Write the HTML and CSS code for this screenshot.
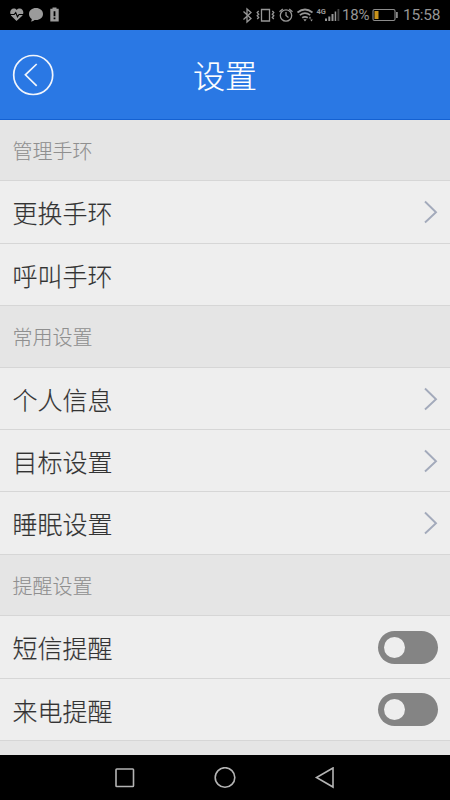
FILE: index.html
```html
<!DOCTYPE html>
<html lang="zh-CN">
<head>
<meta charset="utf-8">
<title>设置</title>
<link rel="stylesheet" href="styles.css">
</head>
<body>
<div class="statusbar">
  <svg class="status-left" width="52" height="16" viewBox="0 0 52 16">
    <path fill="#9b9b9b" d="M6.500 14 1.200 8.700C-1 5.500.7 1.500 3.700 1.500 5 1.500 6 2 6.700 2.900 7.400 2 8.500 1.500 9.800 1.500c3 0 4.800 4 2.500 7.200z"/>
    <path fill="none" stroke="#000" stroke-width="1.100" d="M0 7.500h4.200l1.500-2 1.800 4.300 1.500-2.300H14"/>
    <path fill="#9b9b9b" d="M26 1c4 0 7 2.500 7 6s-3 6-7 6h-1.500c-.8.900-2 1.500-3.700 1.400.8-.8 1-1.600.9-2.500C20 10.800 19 9 19 7c0-3.500 3-6 7-6z"/>
    <path fill="#9b9b9b" d="M42.500.5h4v1.200h2.200V14.500h-8.400V1.700h2.200z"/>
    <path fill="#000" d="M43.600 4.200h1.800v5h-1.800zM43.600 10.500h1.800v1.800h-1.800z"/>
  </svg>
  <svg class="status-right" width="100" height="18" viewBox="241 6 100 18" fill="none" stroke="#969696" stroke-width="1.300">
    <path d="m243.500 11.500 7.500 7-4 3.500V9l4 3.500-7.500 7"/>
    <path d="M261.500 9.500h8v11.500h-8zM258.700 11l-1.500 1.600 1.500 1.600-1.500 1.600 1.500 1.600-1.500 1.600M272.300 11l1.500 1.600-1.500 1.600 1.500 1.600-1.500 1.600 1.500 1.600"/>
    <circle cx="286" cy="15.500" r="5.700"/>
    <path d="M286 12v3.500l2.500 2M279.500 11.800l3.300-2.800M292.500 11.800 289.200 9"/>
    <path stroke-width="1.700" d="M297.500 12.500q7.500-6 15 0M299.800 15.200q5.200-4 10.400 0M302.200 17.800q2.800-2 5.600 0"/>
    <path fill="#969696" stroke="none" d="M303.300 19.200h3.400L305 21.500zM310 16.500l1.300 2h-2.600zM311.500 21.500l-1.300-2h2.600zM325 18.500h2V21h-2zM328.300 16.500h2V21h-2zM331.500 14h2v7h-2zM334.700 11.500h1.500V21h-1.500z"/>
    <path fill="#444" stroke="none" d="M337.500 9h1.800v12h-1.800z"/>
    <text class="network" x="316.500" y="14">4G</text>
  </svg>
  <span class="percent">18%</span>
  <svg class="battery" width="27" height="14" viewBox="0 0 27 14">
    <rect x="1" y="1.500" width="22" height="11" rx="1.500" fill="none" stroke="#8c8c8c" stroke-width="1.100"/>
    <path fill="#c8921c" d="M2.500 3h4v8h-4z"/>
    <path fill="#8c8c8c" d="M24 4h1.800v6H24z"/>
  </svg>
  <span class="clock">15:58</span>
</div>
<header class="header">
  <svg class="back" width="42" height="42" viewBox="0 0 42 42">
    <circle cx="21.200" cy="21" r="19.500"/>
    <path d="M24.700 10 13.400 20.800l11.300 11"/>
  </svg>
  <h1 class="title">设置</h1>
</header>
<main class="list">
  <h2 class="section">管理手环</h2>
  <div class="row">更换手环<svg class="chevron" width="14" height="24" viewBox="0 0 14 24"><path d="m1 1.500 11 10.700L1 22.500"/></svg></div>
  <div class="row">呼叫手环</div>
  <h2 class="section">常用设置</h2>
  <div class="row">个人信息<svg class="chevron" width="14" height="24" viewBox="0 0 14 24"><path d="m1 1.500 11 10.700L1 22.500"/></svg></div>
  <div class="row">目标设置<svg class="chevron" width="14" height="24" viewBox="0 0 14 24"><path d="m1 1.500 11 10.700L1 22.500"/></svg></div>
  <div class="row">睡眠设置<svg class="chevron" width="14" height="24" viewBox="0 0 14 24"><path d="m1 1.500 11 10.700L1 22.500"/></svg></div>
  <h2 class="section">提醒设置</h2>
  <div class="row">短信提醒<span class="switch"><span class="knob"></span></span></div>
  <div class="row">来电提醒<span class="switch"><span class="knob"></span></span></div>
</main>
<nav class="navbar">
  <svg width="22" height="22" viewBox="0 0 22 22"><rect x="2" y="2" width="17.500" height="17.500" rx=".8"/></svg>
  <svg width="22" height="22" viewBox="0 0 22 22"><circle cx="11" cy="10.500" r="9.800"/></svg>
  <svg width="22" height="22" viewBox="0 0 22 22"><path d="M19 1 2.500 10.500 19 20z"/></svg>
</nav>
</body>
</html>
```
FILE: styles.css
```css
* { box-sizing: border-box; }

body {
  margin: 0;
  width: 450px;
  height: 800px;
  overflow: hidden;
  display: flex;
  flex-direction: column;
  background: #000;
  font-family: "Noto Sans CJK SC", sans-serif;
  font-weight: 300;
}

.statusbar {
  height: 30px;
  display: flex;
  align-items: center;
  padding: 0 9px 0 10px;
  color: #969696;
  font-family: Roboto, sans-serif;
  font-weight: 400;
  font-size: 16px;
  line-height: 30px;
}

.status-right { margin-left: auto; flex: none; }
.network { font: 700 7.5px Roboto, sans-serif; fill: #969696; stroke: none; }
.percent { margin-left: 1px; width: 28px; font-size: 15px; letter-spacing: -0.2px; }
.battery { margin-left: 2px; flex: none; }
.clock { margin-left: 4px; width: 38px; font-size: 15.5px; letter-spacing: -0.3px; }

.header {
  height: 90px;
  display: grid;
  grid-template-columns: 42px 1fr 42px;
  align-items: center;
  padding: 0 12px;
  background: #2a78e4;
  border-bottom: 1px solid #1461d2;
}

.back { fill: none; stroke: #f1f5fc; stroke-width: 1.7; }

.title {
  margin: 0;
  padding-bottom: 2px;
  text-align: center;
  color: #fff;
  font-size: 32px;
  line-height: 48px;
  font-weight: 300;
  -webkit-text-stroke: 0.2px;
}

.list {
  height: 635px;
  display: grid;
  grid-template-rows: 61px 63px 62px 62px 62px 62px 63px 61px 63px 62px;
  background: #e5e5e5;
}

.section, .row {
  margin: 0;
  display: flex;
  align-items: center;
  padding: 0 12px 0 12.5px;
  border-bottom: 1px solid #d6d6d6;
  font-weight: 300;
}

.section { color: #8f8f8f; font-size: 20px; -webkit-text-stroke: 0.1px; }

.row {
  justify-content: space-between;
  background: #eee;
  color: #333;
  font-size: 25px;
  -webkit-text-stroke: 0.15px;
}

.chevron { fill: none; stroke: #a3aabb; stroke-width: 1.9; }

.switch {
  width: 60.5px;
  height: 33px;
  padding: 6px;
  border-radius: 17px;
  background: #848484;
}

.knob {
  display: block;
  width: 21px;
  height: 21px;
  border-radius: 50%;
  background: #eee;
}

.navbar {
  height: 45px;
  display: flex;
  justify-content: space-between;
  align-items: center;
  padding: 0 114px;
}

.navbar svg { fill: none; stroke: #b4b4b4; stroke-width: 1.6; }
```
